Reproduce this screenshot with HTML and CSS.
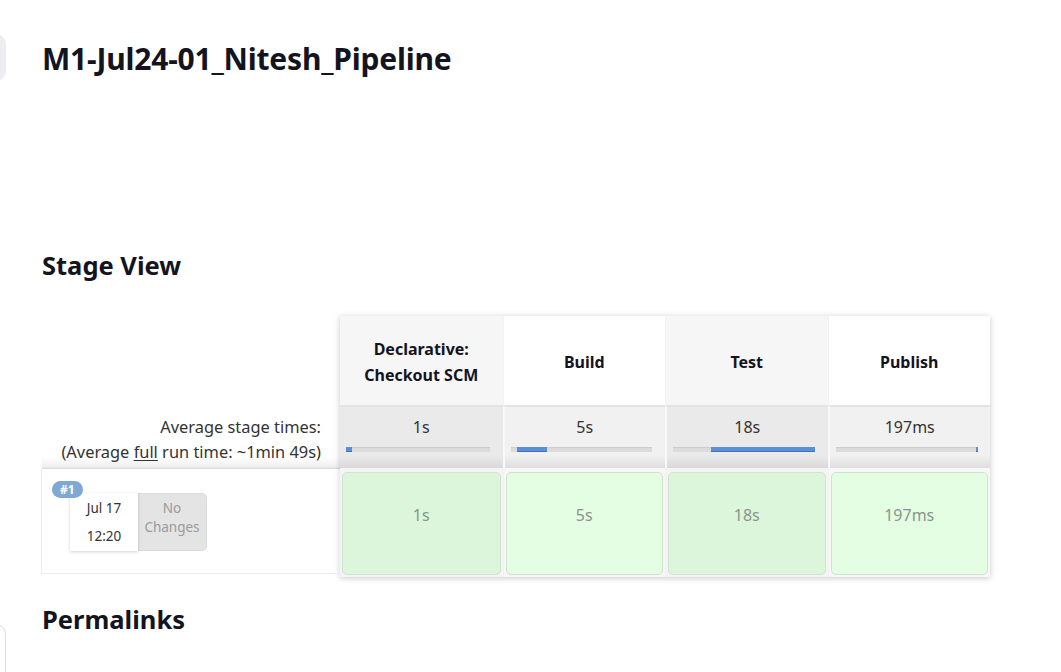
FILE: index.html
```html
<!DOCTYPE html>
<html>
<head>
<meta charset="utf-8">
<link rel="stylesheet" href="styles.css">
</head>
<body>
<div class="page">
  <aside class="side">
    <div class="side-card top"></div>
    <div class="side-card bottom"></div>
  </aside>
  <main class="main">
    <h1 class="title">M1-Jul24-01_Nitesh_Pipeline</h1>
    <h2 class="section stage-title">Stage View</h2>
    <div class="stage-view">
      <div class="left-col">
        <div class="left-head"></div>
        <div class="avg-label">
          <div>Average stage times:</div>
          <div>(Average <u>full</u> run time: ~1min 49s)</div>
        </div>
        <div class="build-box">
          <span class="badge">#1</span>
          <div class="build-info">
            <div class="date-card">
              <div>Jul 17</div>
              <div>12:20</div>
            </div>
            <div class="changes">No<br>Changes</div>
          </div>
        </div>
      </div>
      <div class="stages">
        <div class="row head-row">
          <div class="cell odd">Declarative:<br>Checkout SCM</div>
          <div class="cell even">Build</div>
          <div class="cell odd">Test</div>
          <div class="cell even">Publish</div>
        </div>
        <div class="row avg-row">
          <div class="cell odd"><span>1s</span><div class="bar"><i style="left:0;width:6px"></i></div></div>
          <div class="cell even"><span>5s</span><div class="bar"><i style="left:6px;width:30px"></i></div></div>
          <div class="cell odd"><span>18s</span><div class="bar"><i style="left:38px;width:104px"></i></div></div>
          <div class="cell even"><span>197ms</span><div class="bar"><i style="left:140px;width:2px"></i></div></div>
        </div>
        <div class="row build-row">
          <div class="cell odd"><div class="res">1s</div></div>
          <div class="cell even"><div class="res">5s</div></div>
          <div class="cell odd"><div class="res">18s</div></div>
          <div class="cell even"><div class="res">197ms</div></div>
        </div>
      </div>
    </div>
    <h2 class="section perma">Permalinks</h2>
  </main>
</div>
</body>
</html>
```

FILE: styles.css
```css
* { box-sizing: border-box; }
html, body { margin: 0; padding: 0; background: #fff; }
body {
  font-family: "Noto Sans", "DejaVu Sans", sans-serif;
  color: #14141f;
  width: 1061px;
  height: 672px;
  overflow: hidden;
}
.page { display: flex; }
.side { width: 6px; flex: none; position: relative; }
.side-card {
  width: 200px;
  margin-left: -194px;
  border-radius: 10px;
}
.side-card.top {
  margin-top: 34px;
  height: 47px;
  background: #ededf2;
}
.side-card.bottom {
  margin-top: 543px;
  height: 80px;
  border: 1px solid #dcdce6;
  background: #fff;
}
.main { padding-left: 36px; flex: 1; }
.title {
  margin: 40px 0 0;
  font-size: 30px;
  line-height: 38px;
  font-weight: 700;
  letter-spacing: -0.2px;
}
.section {
  font-size: 25.5px;
  font-weight: 700;
  margin: 0;
  line-height: 32px;
}
.stage-title { margin-top: 171px; }
.stage-view { display: flex; margin-top: 35px; }
.left-col { width: 298px; flex: none; }
.left-head { height: 89px; }
.avg-label {
  height: 64px;
  text-align: right;
  padding: 9px 19px 0 0;
  font-size: 16.4px;
  line-height: 25px;
  color: #333;
  background: linear-gradient(to bottom, #fff 0, #fff 52px, #f0f0f0 62px, #ddd 63px, #ddd 64px);
}
.avg-label u { text-underline-offset: 2px; }
.build-box {
  position: relative;
  height: 104px;
  margin-top: 1px;
  margin-left: -1px;
  border: 1px solid #ececec;
  border-top: none;
  padding: 23px 0 0 28px;
}
.badge {
  position: absolute;
  z-index: 2;
  left: 10px;
  top: 11px;
  background: #7fa8d4;
  color: #fff;
  font-size: 12px;
  font-weight: 700;
  line-height: 17px;
  padding: 0 8px;
  border-radius: 9px;
}
.build-info { display: flex; align-items: flex-start; }
.date-card {
  width: 68px;
  height: 58px;
  background: #fff;
  box-shadow: 0 1px 3px rgba(0,0,0,.18);
  text-align: center;
  font-size: 13.5px;
  line-height: 28px;
  padding-top: 1px;
  color: #333;
  position: relative;
  z-index: 1;
}
.changes {
  width: 69px;
  height: 58px;
  margin-top: 0;
  background: #e4e4e4;
  border: 1px solid #dadada;
  border-left: none;
  border-radius: 0 5px 5px 0;
  color: #9a9a9a;
  font-size: 13.5px;
  line-height: 19px;
  text-align: center;
  padding-top: 5px;
}
.stages {
  width: 650px;
  flex: none;
  box-shadow: 0 1px 6px rgba(0,0,0,.22);
  background: #fff;
}
.row { display: flex; }
.cell { width: 162.5px; flex: none; text-align: center; }
.cell + .cell { border-left: 1px solid #f2f2f2; }
.head-row .cell {
  height: 89px;
  display: flex;
  align-items: center;
  justify-content: center;
  font-weight: 700;
  font-size: 16px;
  line-height: 26px;
  color: #14141f;
  padding-top: 2px;
}
.head-row .odd { background: #f6f6f6; }
.head-row .even { background: #fff; }
.avg-row .cell {
  height: 63px;
  border-top: 2px solid #e3e3e3;
  padding-top: 8px;
  font-size: 16px;
  line-height: 24px;
  color: #333;
}
.avg-row .odd { background: linear-gradient(to bottom, #eaeaea 0, #eaeaea 48px, #d9d9d9 61px); }
.avg-row .even { background: linear-gradient(to bottom, #f1f1f1 0, #f1f1f1 48px, #dedede 61px); }
.avg-row .cell + .cell { border-left: 2px solid #f8f8f8; }
.bar {
  position: relative;
  height: 5px;
  margin: 8px 13px 0 6px;
  background: #dcdcdc;
  box-shadow: inset 0 1px 1px rgba(0,0,0,.08);
}
.bar i {
  position: absolute;
  top: 0;
  height: 5px;
  background: #5b8fd5;
  border-bottom: 1px solid #3f74bd;
}
.build-row .cell {
  height: 109px;
  padding: 4px 2px 2px;
  background: #f4f4f4;
}
.build-row .even { background: #f7f7f7; }
.res {
  height: 103px;
  border: 1px solid #cfe3cf;
  border-radius: 5px;
  font-size: 16px;
  line-height: 84px;
  color: #8a958a;
}
.build-row .odd .res { background: #dcf6dc; }
.build-row .even .res { background: #e4fee4; }
.perma { margin-top: 26px; }
```
